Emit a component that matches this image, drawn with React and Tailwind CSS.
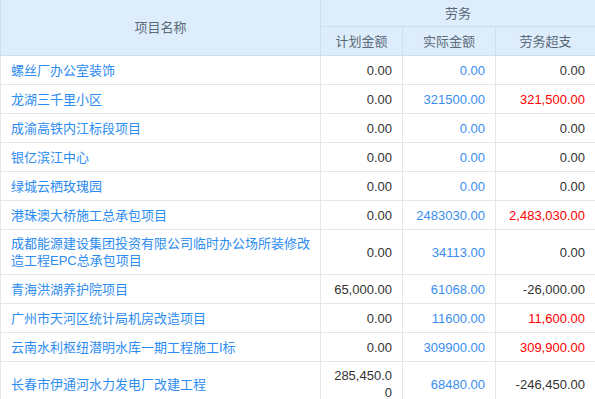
import React from 'react';

const rows = [
  { name: '螺丝厂办公室装饰', plan: '0.00', actual: '0.00', over: '0.00', red: false },
  { name: '龙湖三千里小区', plan: '0.00', actual: '321500.00', over: '321,500.00', red: true },
  { name: '成渝高铁内江标段项目', plan: '0.00', actual: '0.00', over: '0.00', red: false },
  { name: '银亿滨江中心', plan: '0.00', actual: '0.00', over: '0.00', red: false },
  { name: '绿城云栖玫瑰园', plan: '0.00', actual: '0.00', over: '0.00', red: false },
  { name: '港珠澳大桥施工总承包项目', plan: '0.00', actual: '2483030.00', over: '2,483,030.00', red: true },
  { name: '成都能源建设集团投资有限公司临时办公场所装修改造工程EPC总承包项目', plan: '0.00', actual: '34113.00', over: '0.00', red: false },
  { name: '青海洪湖养护院项目', plan: '65,000.00', actual: '61068.00', over: '-26,000.00', red: false },
  { name: '广州市天河区统计局机房改造项目', plan: '0.00', actual: '11600.00', over: '11,600.00', red: true },
  { name: '云南水利枢纽潜明水库一期工程施工I标', plan: '0.00', actual: '309900.00', over: '309,900.00', red: true },
  { name: '长春市伊通河水力发电厂改建工程', plan: '285,450.00', actual: '68480.00', over: '-246,450.00', red: false },
];

export default function App() {
  return (
    <div className="w-[595px] h-[399px] overflow-hidden bg-white font-['Liberation_Sans','Noto_Sans_CJK_SC',sans-serif] text-[13px] leading-[17px]">
      <table className="table-fixed w-[595px] border-separate border-spacing-0">
        <colgroup>
          <col className="w-[321px]" />
          <col className="w-[82px]" />
          <col className="w-[93px]" />
          <col className="w-[99px]" />
        </colgroup>
        <thead className="bg-[#deedfb] text-[#5a6a78] font-normal">
          <tr>
            <th rowSpan={2} className="font-normal text-center border-l border-r border-b border-[#c9def0] h-[56px] p-0">
              项目名称
            </th>
            <th colSpan={3} className="font-normal text-center border-b border-[#c9def0] h-[27px] p-0">
              劳务
            </th>
          </tr>
          <tr>
            <th className="font-normal text-center border-r border-b border-[#c9def0] h-[29px] p-0">计划金额</th>
            <th className="font-normal text-center border-r border-b border-[#c9def0] h-[29px] p-0">实际金额</th>
            <th className="font-normal text-center border-b border-[#c9def0] h-[29px] p-0">劳务超支</th>
          </tr>
        </thead>
        <tbody>
          {rows.map((r) => (
            <tr key={r.name}>
              <td className="border-l border-r border-b border-[#e4e6e9] pl-[10px] pr-[8px] py-[5px] h-[29px] text-[#2d8cf0] break-all">
                {r.name}
              </td>
              <td className="border-r border-b border-[#e4e6e9] px-[10px] py-[5px] text-right text-[#333] break-all">
                {r.plan}
              </td>
              <td className="border-r border-b border-[#e4e6e9] px-[10px] py-[5px] text-right text-[#3a8ef0] break-all">
                {r.actual}
              </td>
              <td className={`border-b border-[#e4e6e9] px-[10px] py-[5px] text-right break-all ${r.red ? 'text-[#ff0000]' : 'text-[#333]'}`}>
                {r.over}
              </td>
            </tr>
          ))}
        </tbody>
      </table>
    </div>
  );
}
